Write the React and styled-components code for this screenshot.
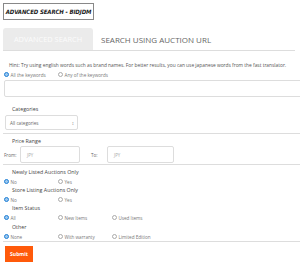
import React, { useState } from 'react';
import styled, { createGlobalStyle } from 'styled-components';

const GlobalStyle = createGlobalStyle`
    body {
        margin: 0;
        background: #fff;
        font-family: "Open Sans", "Liberation Sans", sans-serif;
        color: #555;
    }
`;

const Page = styled.div`
    width: 300px;
    height: 263px;
    overflow: hidden;
    display: flex;
    flex-direction: column;
`;

const TitleBox = styled.div`
    margin: 3px 0 0 3px;
    width: 89px;
    height: 15px;
    border: 1px solid #888;
    display: flex;
    align-items: center;
    justify-content: center;
    font-family: "DejaVu Sans Condensed", "DejaVu Sans", sans-serif;
    font-weight: bold;
    font-style: italic;
    font-size: 6px;
    color: #1a1a1a;
    letter-spacing: -0.1px;
`;

const Tabs = styled.div`
    display: flex;
    align-items: flex-end;
    margin: 8px 5px 0 3px;
    border-bottom: 1px solid #ddd;
`;

const Tab = styled.div`
    height: 22px;
    display: flex;
    align-items: center;
    justify-content: ${p => (p.active ? 'center' : 'flex-start')};
    padding: 0 8px;
    width: ${p => (p.active ? '90px' : 'auto')};
    box-sizing: border-box;
    background: ${p => (p.active ? '#ebebeb' : 'transparent')};
    color: ${p => (p.active ? '#fbfbfb' : '#666')};
    border-radius: 3px 3px 0 0;
    font-size: ${p => (p.active ? '7.4px' : '8px')};
    white-space: nowrap;
    text-transform: uppercase;
`;

const Form = styled.div`
    display: flex;
    flex-direction: column;
    padding: 0 0 0 4px;
`;

const Hint = styled.div`
    font-size: 4.85px;
    color: #555;
    margin: 11px 0 0 5px;
    white-space: nowrap;
`;

const RadioRow = styled.div`
    display: flex;
    align-items: center;
    height: 9px;
    margin-top: ${p => p.top || 0}px;
`;

const RadioItem = styled.label`
    display: flex;
    align-items: center;
    gap: 1.5px;
    width: 54px;
    font-size: 4.6px;
    color: #777;
`;

const Dot = styled.span`
    width: 5px;
    height: 5px;
    border-radius: 50%;
    box-sizing: border-box;
    border: ${p => (p.checked ? '1.5px solid #1e7fd6' : '0.6px solid #aaa')};
    background: ${p => (p.checked ? '#9cc7ee' : '#fff')};
`;

const TextInput = styled.div`
    height: 15px;
    margin: 1px -4px 0 0;
    border: 1px solid #ddd;
    border-radius: 2px;
`;

const Label = styled.div`
    font-size: 5.3px;
    color: #444;
    margin: ${p => p.top || 0}px 0 0 8px;
    height: 9px;
    line-height: 9px;
`;

const Select = styled.div`
    width: 73px;
    height: 15px;
    margin: 1px 0 0 1px;
    box-sizing: border-box;
    border: 1px solid #ddd;
    border-radius: 2px;
    display: flex;
    align-items: center;
    justify-content: space-between;
    padding: 0 3px 0 4px;
    font-size: 4.6px;
    color: #666;
`;

const Divider = styled.div`
    height: 1px;
    background: #ddd;
    margin: ${p => p.top ?? 2}px 0 0 -1px;
`;

const PriceRow = styled.div`
    display: flex;
    align-items: center;
    font-size: 4.6px;
    color: #666;
`;

const PriceLabel = styled.span`
    width: ${p => p.w}px;
    margin-left: ${p => p.gap || 0}px;
`;

const PriceInput = styled.div`
    width: ${p => p.w}px;
    height: 17px;
    box-sizing: border-box;
    border: 1px solid #ddd;
    border-radius: 2px;
    display: flex;
    align-items: center;
    padding-left: 6px;
    color: #aaa;
    font-size: 4.4px;
`;

const SubmitButton = styled.button`
    margin: 4px 0 0 1px;
    width: 28px;
    height: 16px;
    background: #ff5a0a;
    border: none;
    color: #fff;
    font-family: "Open Sans", sans-serif;
    font-weight: bold;
    font-size: 5px;
    padding: 0;
`;

function Radios({ options, value, onChange, top }) {
    return (
        <RadioRow top={top}>
            {options.map((o, i) => (
                <RadioItem key={o} onClick={() => onChange(i)}>
                    <Dot checked={value === i} />
                    {o}
                </RadioItem>
            ))}
        </RadioRow>
    );
}

export default function App() {
    const [keywords, setKeywords] = useState(0);
    const [newly, setNewly] = useState(0);
    const [store, setStore] = useState(0);
    const [status, setStatus] = useState(0);
    const [other, setOther] = useState(0);

    return (
        <Page>
            <GlobalStyle />
            <TitleBox>ADVANCED SEARCH - BIDJDM</TitleBox>
            <Tabs>
                <Tab active>Advanced Search</Tab>
                <Tab>Search using Auction URL</Tab>
            </Tabs>
            <Form>
                <Hint>Hint: Try using english words such as brand names. For better results, you can use japanese words from the fast translator.</Hint>
                <Radios top={2} options={['All the keywords', 'Any of the keywords']} value={keywords} onChange={setKeywords} />
                <TextInput />
                <Label top={8}>Categories</Label>
                <Select>
                    All categories
                    <span>↕</span>
                </Select>
                <Divider top={3} />
                <Label top={3}>Price Range</Label>
                <PriceRow>
                    <PriceLabel w={16}>From:</PriceLabel>
                    <PriceInput w={60}>JPY</PriceInput>
                    <PriceLabel w={16} gap={11}>To:</PriceLabel>
                    <PriceInput w={67}>JPY</PriceInput>
                </PriceRow>
                <Divider top={1} />
                <Label top={3}>Newly Listed Auctions Only</Label>
                <Radios options={['No', 'Yes']} value={newly} onChange={setNewly} />
                <Label>Store Listing Auctions Only</Label>
                <Radios options={['No', 'Yes']} value={store} onChange={setStore} />
                <Label>Item Status</Label>
                <Radios options={['All', 'New Items', 'Used Items']} value={status} onChange={setStatus} />
                <Label top={1}>Other</Label>
                <Radios options={['None', 'With warranty', 'Limited Edition']} value={other} onChange={setOther} />
                <Divider top={0} />
                <SubmitButton>Submit</SubmitButton>
            </Form>
        </Page>
    );
}
